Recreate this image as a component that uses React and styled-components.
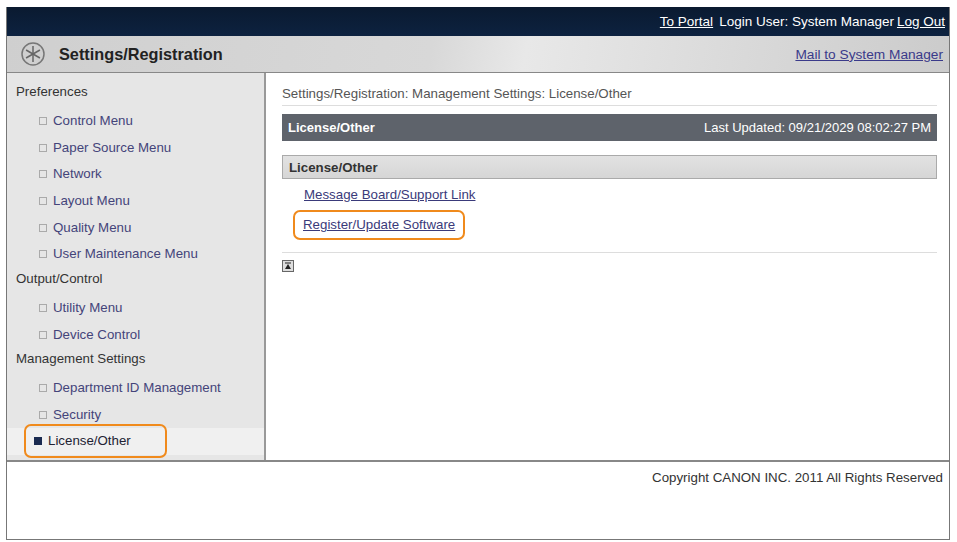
import React from "react";
import styled, { createGlobalStyle } from "styled-components";

const G = createGlobalStyle`
  html,body{margin:0;padding:0;background:#fff;}
  body{font-family:"Liberation Sans",Arial,sans-serif;font-size:13.3px;color:#333;}
`;
const Frame = styled.div`
  margin:7px 0 0 6px;width:944px;height:533px;border:1px solid #777;border-top:none;box-sizing:border-box;
  display:flex;flex-direction:column;
`;
const TopBar = styled.div`
  height:29px;background:linear-gradient(#0a1a30,#0d2240);display:flex;justify-content:flex-end;align-items:center;
  padding:0 4px;gap:6px;color:#fff;font-size:13.5px;
`;
const TopLink = styled.span`text-decoration:underline;`;
const Header = styled.div`
  height:37px;box-sizing:border-box;border-bottom:1px solid #888;
  background:linear-gradient(100deg,#cfcfcf 0%,#d8d8d8 45%,#e8e8e8 55%,#cbcbcb 100%);
  display:flex;align-items:center;padding:0 6px 0 12px;
`;
const Title = styled.div`font-weight:bold;font-size:16.3px;color:#222;margin-left:12px;flex:1;`;
const MailLink = styled.span`color:#3a3a8a;text-decoration:underline;font-size:13.7px;`;
const Body = styled.div`display:flex;height:387px;border-bottom:2px solid #888;`;
const Side = styled.div`
  width:259px;background:#e6e6e6;border-right:2px solid #999;padding-top:8px;box-sizing:border-box;
`;
const Group = styled.div`height:26.7px;line-height:22px;padding-left:9px;color:#333;`;
const Item = styled.div`
  height:26.7px;line-height:24px;padding-left:${p=>p.$active?"17px":"32px"};color:#44447a;display:flex;align-items:center;gap:6px;
  ${p=>p.$active?"background:#f0f0f0;":""}
`;
const Bullet = styled.span`
  width:6px;height:6px;border:1px solid ${p=>p.$active?"#1a2a50":"#aaa"};background:${p=>p.$active?"#1a2a50":"transparent"};display:inline-block;
`;
const ActiveWrap = styled.span`
  display:inline-flex;align-items:center;gap:6px;border:2.5px solid #f08a1c;border-radius:7px;padding:3px 34px 3px 8px;color:#223;
`;
const Main = styled.div`flex:1;padding:13px 12px 0 16px;`;
const Crumb = styled.div`color:#555;padding-bottom:4px;border-bottom:1px solid #ddd;`;
const DarkBar = styled.div`
  margin-top:8px;height:27px;background:#5e636b;color:#fff;display:flex;justify-content:space-between;align-items:center;padding:0 6px;
  font-size:13px;
`;
const Bold = styled.span`font-weight:bold;`;
const SecBar = styled.div`
  margin-top:14px;height:22px;border:1px solid #aaa;background:linear-gradient(#e2e2e2,#d6d6d6);display:flex;align-items:center;padding-left:6px;
  font-weight:bold;color:#333;
`;
const Links = styled.div`padding:8px 0 12px 22px;display:flex;flex-direction:column;align-items:flex-start;gap:8px;border-bottom:1px solid #ddd;`;
const A = styled.span`color:#3a3a7a;text-decoration:underline;`;
const Hl = styled.span`border:2.5px solid #f08a1c;border-radius:7px;padding:5px 8px 6px 8px;margin-left:-11px;`;
const TopBtn = styled.div`
  margin-top:7px;width:10px;height:10px;border:1px solid #666;background:#ddd;display:flex;align-items:center;justify-content:center;
`;
const Footer = styled.div`text-align:right;padding:8px 6px 0 0;font-size:13.3px;color:#333;`;

export default function App(){
  const Ic = () => (
    <svg width="28" height="28" viewBox="0 0 28 28"><circle cx="14" cy="14" r="11" fill="none" stroke="#777" strokeWidth="1.5"/>
      <g stroke="#666" strokeWidth="1.5">{[0,60,120].map(a=><line key={a} x1="14" y1="6" x2="14" y2="22" transform={`rotate(${a} 14 14)`}/>)}</g></svg>
  );
  return (<><G/><Frame>
    <TopBar><TopLink>To Portal</TopLink><span>Login User: System Manager</span><TopLink style={{marginLeft:-3}}>Log Out</TopLink></TopBar>
    <Header><Ic/><Title>Settings/Registration</Title><MailLink>Mail to System Manager</MailLink></Header>
    <Body>
      <Side>
        <Group>Preferences</Group>
        {["Control Menu","Paper Source Menu","Network","Layout Menu","Quality Menu","User Maintenance Menu"].map(t=><Item key={t}><Bullet/>{t}</Item>)}
        <Group>Output/Control</Group>
        {["Utility Menu","Device Control"].map(t=><Item key={t}><Bullet/>{t}</Item>)}
        <Group>Management Settings</Group>
        {["Department ID Management","Security"].map(t=><Item key={t}><Bullet/>{t}</Item>)}
        <Item $active><ActiveWrap><Bullet $active/>License/Other</ActiveWrap></Item>
      </Side>
      <Main>
        <Crumb>Settings/Registration: Management Settings: License/Other</Crumb>
        <DarkBar><Bold>License/Other</Bold><span>Last Updated: 09/21/2029 08:02:27 PM</span></DarkBar>
        <SecBar>License/Other</SecBar>
        <Links><A>Message Board/Support Link</A><Hl><A>Register/Update Software</A></Hl></Links>
        <TopBtn><svg width="8" height="8" viewBox="0 0 8 8"><rect x="1" y="0.5" width="6" height="1" fill="#222"/><path d="M4 2L7 7H1Z" fill="#222"/></svg></TopBtn>
      </Main>
    </Body>
    <Footer>Copyright CANON INC. 2011 All Rights Reserved</Footer>
  </Frame></>);
}
